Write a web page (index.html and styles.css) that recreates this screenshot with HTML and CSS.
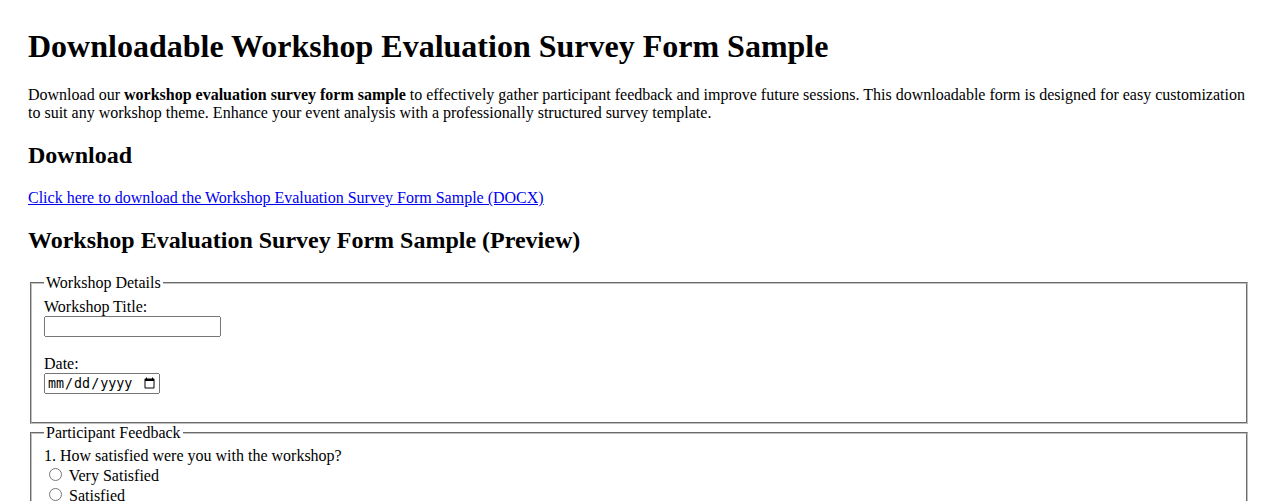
FILE: index.html
```html
<!DOCTYPE html>
<html lang="en">
<head>
<meta charset="utf-8">
<title>Downloadable Workshop Evaluation Survey Form Sample</title>
<link rel="stylesheet" href="styles.css">
</head>
<body class="page">
<h1 class="title">Downloadable Workshop Evaluation Survey Form Sample</h1>
<p class="intro">Download our <strong>workshop evaluation survey form sample</strong> to effectively gather participant feedback and improve future sessions. This downloadable form is designed for easy customization to suit any workshop theme. Enhance your event analysis with a professionally structured survey template.</p>
<h2 class="section">Download</h2>
<p class="download"><a class="download-link" href="#">Click here to download the Workshop Evaluation Survey Form Sample (DOCX)</a></p>
<h2 class="section">Workshop Evaluation Survey Form Sample (Preview)</h2>
<form class="survey">
<fieldset class="group">
<legend class="group-title">Workshop Details</legend>
<label class="field-label" for="title">Workshop Title:</label><br>
<input class="text-input" type="text" id="title"><br><br>
<label class="field-label" for="date">Date:</label><br>
<input class="date-input" type="date" id="date"><br><br>
</fieldset>
<fieldset class="group">
<legend class="group-title">Participant Feedback</legend>
<label class="field-label">1. How satisfied were you with the workshop?</label><br>
<input class="radio" type="radio" name="sat" id="s1"> <label for="s1">Very Satisfied</label><br>
<input class="radio" type="radio" name="sat" id="s2"> <label for="s2">Satisfied</label><br>
<input class="radio" type="radio" name="sat" id="s3"> <label for="s3">Neutral</label><br>
<input class="radio" type="radio" name="sat" id="s4"> <label for="s4">Dissatisfied</label><br>
</fieldset>
</form>
</body>
</html>
```
FILE: styles.css
```css
.page {
  margin: 28px;
  font-family: "Liberation Serif", "Times New Roman", serif;
  font-size: 16px;
  color: #000;
  background: #fff;
}
.title {
  font-size: 32px;
  font-weight: bold;
  margin-top: 0;
}
.section {
  font-size: 24px;
  font-weight: bold;
}
.download-link {
  color: #0000ee;
}
.survey {
  margin: 0;
}
.group {
  margin: 0 2px;
  border: 2px groove #c0c0c0;
}
.text-input {
  box-sizing: border-box;
  width: 177px;
  height: 21px;
  font-size: 13.33px;
}
.date-input {
  box-sizing: border-box;
  width: 116px;
  height: 21px;
  font-size: 13.33px;
}
```
